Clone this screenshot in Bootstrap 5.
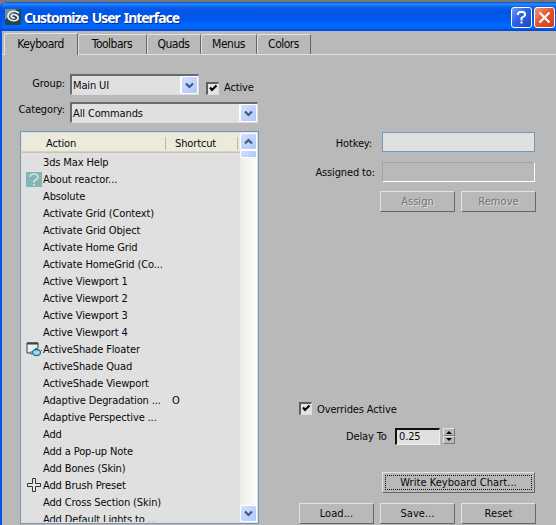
<!DOCTYPE html>
<html lang="en">
<head>
<meta charset="utf-8">
<title>Customize User Interface</title>
<link rel="stylesheet" href="https://cdn.jsdelivr.net/npm/bootstrap@5.3.0/dist/css/bootstrap.min.css">
<style>
body{width:556px;height:525px;overflow:hidden;background:#777;font:11px/17px "DejaVu Sans Condensed","Noto Sans",sans-serif;font-stretch:condensed;letter-spacing:-.13px;color:#080808;white-space:nowrap}
.window{height:523px;margin-top:2px;background:#b9b9b9;border-left:2px solid #0453e6;border-radius:6px 0 0 0;overflow:hidden}
.titlebar{height:29px;margin-left:-2px;padding:1px 1px 0 5px;background:linear-gradient(#0848c8 0,#2b8cff 2px,#0862ee 5px,#0055e5 9px,#0058ec 17px,#0068ff 23px,#0065fa 26px,#0040c8 29px)}
.caption{font:bold 14px "Noto Sans",sans-serif;color:#fff;text-shadow:1px 1px #0a2a80;letter-spacing:-1.05px;word-spacing:1.5px;margin-left:3px;padding-top:1px}
.capbtn{width:21px;height:21px;border:1px solid #fff;border-radius:3px;background:linear-gradient(135deg,#6f9cf8,#2d61e3 45%,#1747cc);padding:0}
.capbtn.closer{background:linear-gradient(135deg,#f09a78,#e2512a 50%,#cf3d16)}
.capbtns{gap:2px}
.tabs{height:24px;padding:3px 0 0 2px;border-bottom:1px solid #e2e2e2}
.tab-item{height:20px;padding-top:1px;border-top:1px solid #e5e5e5;border-right:1px solid #666;box-shadow:inset 1px 0 #dedede;border-radius:3px 2px 0 0;text-align:center;font-size:12px;letter-spacing:-.5px}
.tab-item.current{height:22px;margin-top:-1px;padding:2px 0 0 0;background:#b9b9b9;border-right-color:#666;box-shadow:inset 1px 0 #e2e2e2}
.w1{width:74px}.w2{width:69px}.w3{width:54px}.w4{width:56px}.w5{width:54px}
.left-pane{width:256px;padding:19px 0 0 18px}
.right-pane{width:298px}
.combo{height:21px;margin-left:5px;border:2px solid #666b70;border-right:1px solid #ddd;border-bottom:1px solid #ddd;background:#e0e0e0;padding-left:1px}
.combo-text{padding-top:1px}
.drop{width:17px;height:100%;border:1px solid #fff;border-radius:2px;background:linear-gradient(135deg,#d3e0ff,#afc7f8)}
.combo .drop{border-left-width:2px;width:18px}
.w-combo{width:129px}.w-cat{width:189px}
.check{width:13px;height:13px;background:#e3e3e3;border:2px solid #5e5e5e;border-right:1px solid #ddd;border-bottom:1px solid #ddd}
.check svg{display:block}
.actcheck{margin:8px 0 0 7px}.actlab{margin:5px 0 0 5px}
.grouplab{width:45px;text-align:right;padding-top:1px}
.grouprow{height:21px}
.catrow{height:21px;margin-top:7px}
.catlab{width:45px;display:flex;justify-content:flex-end;margin-top:-1px}
.listing{width:239px;height:393px;margin-top:8px;border:1px solid #7398c0;background:#e0e0e0;padding:1px}
.colhead{height:20px;padding-top:1px;background:#ebeadb;border-bottom:1px solid #c5c3b2;box-shadow:inset 0 -1px #d5d3c2}
.hd{border-right:1px solid #bbb9aa;height:13px;line-height:13px}
.h1c{width:144px;padding-left:24px}.h2c{width:72px;padding-left:9px}
.rows{height:369px;padding-top:1px;overflow:hidden}
.entry{height:17px;padding-left:4px}
.ico{width:17px;height:17px;display:flex;align-items:center;justify-content:center;padding-right:1px}
.nm{width:129px}
.bar{width:17px;background:linear-gradient(90deg,#eeede5,#fefefb)}
.endbtn{height:17px}.thumb{height:8px}
.field{width:153px;height:20px;border:1px solid #7398c0;background:#e0e0e0}
.field.off{background:#b9b9b9;border-color:#aaa592 #fff #fff #aaa592}
.xbtn{width:75px;height:21px;line-height:18px;border:1px solid;border-color:#e3e3e3 #686868 #686868 #e3e3e3;background:#b9b9b9;padding:0;text-align:center;color:#080808;letter-spacing:.05px;font-size:11px}
.xbtn.off{color:#747474;text-shadow:1px 1px #ddd}
.chart{width:153px;padding:2px}
.focusbox{border:1px dotted #111;height:15px;line-height:13px}
.r-hot{margin-top:77px;padding-right:21px}.r-as{margin-top:10px;padding-right:21px}
.r-b{margin-top:9px;padding-right:20px;gap:6px}
.lab{margin-right:10px;padding-top:3px}.lab2{margin-right:7px;padding-top:2px}
.r-ov{margin-top:190px;padding-left:41px;height:17px}
.ovlab{margin:-1px 0 0 5px}
.r-delay{margin-top:9px;padding-left:88px;height:17px}
.delaylab{width:43px;margin-right:6px}
.num{width:45px;height:17px;border:2px solid #111;border-right:1px solid #eee;border-bottom:1px solid #eee;background:#e0e0e0;line-height:14px;padding-left:2px}
.spinbox{margin-left:3px}
.spin{width:12px;height:8px;border:1px solid;border-color:#e3e3e3 #777 #777 #e3e3e3}
.r-chart{margin-top:27px;padding-right:21px}
.r-end{margin-top:10px;padding-right:20px;gap:6px}
</style>
<script src="https://cdn.jsdelivr.net/npm/bootstrap@5.3.0/dist/js/bootstrap.bundle.min.js"></script>
</head>
<body>
<svg width="0" height="0" class="position-absolute"><defs>
<g id="dn"><path d="M1 1.5 4.5 5 8 1.5" fill="none" stroke="#405c85" stroke-width="2.2"/></g>
<g id="ck"><path d="M2 3.5 4 6 8.5 1.5" fill="none" stroke="#000" stroke-width="2.1"/></g>
</defs></svg>
<div class="window">
 <header class="titlebar d-flex align-items-center">
  <svg width="16" height="16" viewBox="0 0 16 16"><rect width="16" height="16" rx="1" fill="#24464e"/><path d="M0 0h12L0 11z" fill="#708d90"/><path d="M14 4C10 1 3 2 3 7c0 5 8 6 10 3 1-4-5-6-7-3 0 2 2 2 4 2" fill="none" stroke="#e8f0ee" stroke-width="1.7"/></svg>
  <div class="caption">Customize User Interface</div>
  <div class="ms-auto d-flex capbtns">
   <button class="capbtn" aria-label="Help"><svg class="d-block" width="19" height="19" viewBox="0 0 19 19"><path d="M6 7V5.500L7.500 4h4L13 5.500v2L9.500 10v2.500M8.500 14.500h2" fill="none" stroke="#fff" stroke-width="1.9"/></svg></button>
   <button class="capbtn closer" aria-label="Close"><svg class="d-block" width="19" height="19" viewBox="0 0 19 19"><path d="m4.5 4.5 10 10m0-10-10 10" stroke="#fff" stroke-width="2.2"/></svg></button>
  </div>
 </header>
 <nav class="tabs d-flex"><div class="tab-item current w1">Keyboard</div><div class="tab-item w2">Toolbars</div><div class="tab-item w3">Quads</div><div class="tab-item w4">Menus</div><div class="tab-item w5">Colors</div></nav>
 <main class="d-flex">
  <section class="left-pane">
   <div class="grouprow d-flex"><span class="grouplab">Group:</span><div class="combo d-flex w-combo"><span class="flex-fill combo-text">Main UI</span><span class="drop d-flex align-items-center justify-content-center"><svg width="9" height="7"><use href="#dn"/></svg></span></div><span class="check actcheck"><svg width="10" height="9"><use href="#ck"/></svg></span><span class="actlab">Active</span></div>
   <div class="catrow d-flex"><span class="catlab">Category:</span><div class="combo d-flex w-cat"><span class="flex-fill combo-text">All Commands</span><span class="drop d-flex align-items-center justify-content-center"><svg width="9" height="7"><use href="#dn"/></svg></span></div></div>
   <div class="listing d-flex">
    <div class="flex-fill">
     <div class="colhead d-flex align-items-center"><span class="hd h1c">Action</span><span class="hd h2c">Shortcut</span></div>
     <div class="rows">
      <div class="entry d-flex"><span class="ico"></span><span class="nm">3ds Max Help</span></div>
      <div class="entry d-flex"><span class="ico"><svg width="16" height="16"><path fill="#83b4b6" d="M0 0h16v15H0z"/><path d="M4 5q0-3 4-3t4 3q0 2-4 4v2m0 1v2" fill="none" stroke="#d4e4df" stroke-width="1.6"/></svg></span><span class="nm">About reactor...</span></div>
      <div class="entry d-flex"><span class="ico"></span><span class="nm">Absolute</span></div>
      <div class="entry d-flex"><span class="ico"></span><span class="nm">Activate Grid (Context)</span></div>
      <div class="entry d-flex"><span class="ico"></span><span class="nm">Activate Grid Object</span></div>
      <div class="entry d-flex"><span class="ico"></span><span class="nm">Activate Home Grid</span></div>
      <div class="entry d-flex"><span class="ico"></span><span class="nm">Activate HomeGrid (Co...</span></div>
      <div class="entry d-flex"><span class="ico"></span><span class="nm">Active Viewport 1</span></div>
      <div class="entry d-flex"><span class="ico"></span><span class="nm">Active Viewport 2</span></div>
      <div class="entry d-flex"><span class="ico"></span><span class="nm">Active Viewport 3</span></div>
      <div class="entry d-flex"><span class="ico"></span><span class="nm">Active Viewport 4</span></div>
      <div class="entry d-flex"><span class="ico"><svg width="16" height="15"><path d="M1 11V1h11v5M1 11h4" fill="#eee" stroke="#344047"/><path d="M1 1.5h11" stroke="#344047" stroke-width="2"/><ellipse cx="10.5" cy="10.5" rx="4" ry="3" fill="#a5d3ea" stroke="#24729b" stroke-width="1.3"/><path d="M6.500 10H4l2 3M14 10l2-2M9 6.500h3" stroke="#24729b" fill="none"/></svg></span><span class="nm">ActiveShade Floater</span></div>
      <div class="entry d-flex"><span class="ico"></span><span class="nm">ActiveShade Quad</span></div>
      <div class="entry d-flex"><span class="ico"></span><span class="nm">ActiveShade Viewport</span></div>
      <div class="entry d-flex"><span class="ico"></span><span class="nm">Adaptive Degradation ...</span><span>O</span></div>
      <div class="entry d-flex"><span class="ico"></span><span class="nm">Adaptive Perspective ...</span></div>
      <div class="entry d-flex"><span class="ico"></span><span class="nm">Add</span></div>
      <div class="entry d-flex"><span class="ico"></span><span class="nm">Add a Pop-up Note</span></div>
      <div class="entry d-flex"><span class="ico"></span><span class="nm">Add Bones (Skin)</span></div>
      <div class="entry d-flex"><span class="ico"><svg width="14" height="15"><path d="M5.500 .5h3v5h5v3h-5v5h-3v-5h-5v-3h5z" fill="#e8e8e8" stroke="#333"/></svg></span><span class="nm">Add Brush Preset</span></div>
      <div class="entry d-flex"><span class="ico"></span><span class="nm">Add Cross Section (Skin)</span></div>
      <div class="entry d-flex"><span class="ico"></span><span class="nm">Add Default Lights to ...</span></div>
     </div>
    </div>
    <div class="bar d-flex flex-column"><span class="drop endbtn d-flex align-items-center justify-content-center"><svg width="9" height="7"><path d="M1 5.500 4.500 2 8 5.500" fill="none" stroke="#405c85" stroke-width="2.2"/></svg></span><span class="drop thumb"></span><span class="drop endbtn d-flex align-items-center justify-content-center mt-auto"><svg width="9" height="7"><use href="#dn"/></svg></span></div>
   </div>
  </section>
  <section class="right-pane">
   <div class="r-hot d-flex justify-content-end"><span class="lab">Hotkey:</span><span class="field"></span></div>
   <div class="r-as d-flex justify-content-end"><span class="lab lab2">Assigned to:</span><span class="field off"></span></div>
   <div class="r-b d-flex justify-content-end"><button class="xbtn off">Assign</button><button class="xbtn off">Remove</button></div>
   <div class="r-ov d-flex"><span class="check"><svg width="10" height="9"><use href="#ck"/></svg></span><span class="ovlab">Overrides Active</span></div>
   <div class="r-delay d-flex"><span class="delaylab">Delay To</span><span class="num">0.25</span><span class="spinbox d-flex flex-column"><span class="spin"><svg class="d-block" width="10" height="6"><path d="M2 5 5 2l3 3z"/></svg></span><span class="spin"><svg class="d-block" width="10" height="6"><path d="M2 1 5 4l3-3z"/></svg></span></span></div>
   <div class="r-chart d-flex justify-content-end"><button class="xbtn chart"><div class="focusbox">Write Keyboard Chart...</div></button></div>
   <div class="r-end d-flex justify-content-end"><button class="xbtn">Load...</button><button class="xbtn">Save...</button><button class="xbtn">Reset</button></div>
  </section>
 </main>
</div>
</body>
</html>
